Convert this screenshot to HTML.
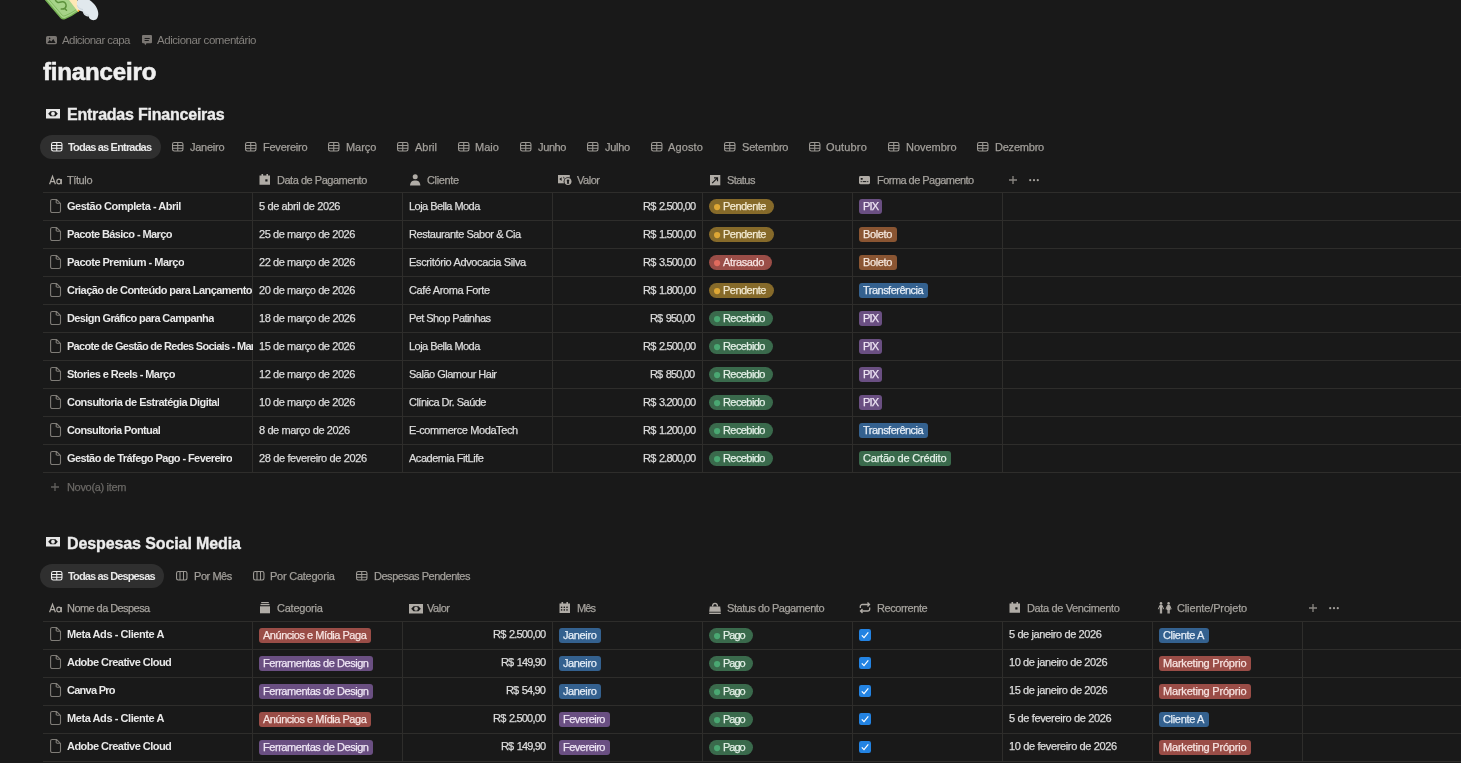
<!DOCTYPE html>
<html><head><meta charset="utf-8"><style>
html,body{margin:0;padding:0}
body{width:1461px;height:763px;background:#191919;position:relative;overflow:hidden;font-family:"Liberation Sans",sans-serif}
.a{position:absolute;display:block}
.t{white-space:nowrap;line-height:1;height:1.2em;will-change:transform}
.t4{-webkit-text-stroke:0.25px currentColor}
svg{overflow:visible}
</style></head><body>
<svg class="a" style="left:40px;top:0px" width="64" height="22" viewBox="0 0 64 22"><path d="M4.8 0 L20.5 18.2 Q22.5 20.3 25 19.3 Q32 16.5 38.3 11.8 L42.8 7 L36.5 0Z" fill="#77b255"/><path d="M6.9 0 L21.2 16.8 Q22.8 18.6 24.7 17.9 Q31.5 15.2 37.6 10.6 L41.3 6.8 L35 0Z" fill="#a6d388"/><path d="M9.3 0 L22.3 15.3 Q23.5 16.4 25 15.8 Q31 13.5 36.8 9.3" fill="none" stroke="#77b255" stroke-width="0.8"/><path d="M15.3 -0.5 C16 2.5 18.5 2.8 21 2 C24.5 1 26.5 3.5 26 6.5 C25.5 8.5 23.5 9.3 21.2 9 M24.8 8.7 L26.5 10.3" fill="none" stroke="#5c913b" stroke-width="1.5" stroke-linecap="round"/><path d="M29 0 L37.8 11.4 L43 6.3 L37 0Z" fill="#ffe8b6"/><path d="M37.8 11.6 L43.5 5.5" stroke="#ffac33" stroke-width="1.4"/><path d="M38 0 H49.5 C54 3 58.5 8.5 58.3 14 C58 18.5 56 20.3 53.3 20.2 C50.5 20 49 18.5 48.8 16.5 C46 16.5 43 14.5 42.8 11.5 C40 11.3 37 9 37.2 5.5 C36.5 3 36.8 1 38 0Z" fill="#e1e8ed"/><path d="M37.3 5.3 C37.8 7.5 40 9.3 43 9.5 M43 11.3 C43.8 13.5 46 15 49 15.3" fill="none" stroke="#ccd6dd" stroke-width="1"/></svg>
<svg class="a" style="left:46px;top:35.9px" width="11" height="8.2" viewBox="0 0 11 8.2"><rect x="0" y="0" width="11" height="8.2" rx="1.6" fill="#7a7672"/><path d="M1.3 7 L3.6 4 L5.3 5.6 L7.3 2.9 L9.6 7Z" fill="#191919"/><circle cx="3.6" cy="2.4" r="0.8" fill="#191919"/></svg>
<div class="a t" style="left:61.60px;top:35.27px;font-size:11.5px;font-weight:400;color:#84817d;letter-spacing:-0.591px;word-spacing:0px">Adicionar capa</div>
<svg class="a" style="left:142.1px;top:34.9px" width="10" height="10.2" viewBox="0 0 10 10.2"><path d="M1 0h8a1 1 0 0 1 1 1v6.2a1 1 0 0 1-1 1H4.5L3.2 10.2 L2.3 8.2H1a1 1 0 0 1-1-1V1a1 1 0 0 1 1-1z" fill="#7a7672"/><path d="M2.6 3.5h5.1M2.6 5.5h4.2" stroke="#191919" stroke-width="1"/></svg>
<div class="a t" style="left:157.30px;top:35.27px;font-size:11.5px;font-weight:400;color:#84817d;letter-spacing:-0.454px;word-spacing:0px">Adicionar comentário</div>
<div class="a t" style="left:42.50px;top:60.18px;font-size:24px;font-weight:700;color:#f0f0f0;letter-spacing:-0.156px;word-spacing:0px;-webkit-text-stroke:0.6px currentColor">financeiro</div>
<svg class="a" style="left:46px;top:108.8px" width="14" height="9.5" viewBox="0 0 14 9.5"><rect x="0" y="0" width="14" height="9.5" fill="#e6e6e6"/><path d="M2.2 4.75 L4.5 2.2 H9.5 L11.8 4.75 L9.5 7.3 H4.5Z" fill="#191919"/><ellipse cx="7" cy="4.75" rx="1.9" ry="2" fill="#e6e6e6"/></svg>
<div class="a t" style="left:67.00px;top:107.46px;font-size:16px;font-weight:700;color:#ececec;letter-spacing:-0.218px;word-spacing:0px;-webkit-text-stroke:0.35px currentColor">Entradas Financeiras</div>
<div class="a" style="left:40px;top:135px;width:121px;height:24px;background:#2f2f2f;border-radius:12px"></div>
<svg class="a" style="left:50.7px;top:142px" width="12" height="10" viewBox="0 0 12 10"><rect x="0.55" y="0.55" width="10.4" height="8.5" rx="1.7" fill="none" stroke="#f0f0f0" stroke-width="1.1"/><path d="M5.75 0.5v8.6M0.5 3.4h10.5M0.5 6.2h10.5" stroke="#f0f0f0" stroke-width="1.05"/></svg>
<div class="a t" style="left:68.00px;top:141.69px;font-size:11px;font-weight:700;color:#e8e8e8;letter-spacing:-0.812px;word-spacing:0px">Todas as Entradas</div>
<svg class="a" style="left:171.7px;top:142px" width="12" height="10" viewBox="0 0 12 10"><rect x="0.55" y="0.55" width="10.4" height="8.5" rx="1.7" fill="none" stroke="#9c9994" stroke-width="1.1"/><path d="M5.75 0.5v8.6M0.5 3.4h10.5M0.5 6.2h10.5" stroke="#9c9994" stroke-width="1.05"/></svg>
<div class="a t t4" style="left:190.20px;top:141.69px;font-size:11px;font-weight:400;color:#a29f9a;letter-spacing:-0.263px;word-spacing:0px">Janeiro</div>
<svg class="a" style="left:244.6px;top:142px" width="12" height="10" viewBox="0 0 12 10"><rect x="0.55" y="0.55" width="10.4" height="8.5" rx="1.7" fill="none" stroke="#9c9994" stroke-width="1.1"/><path d="M5.75 0.5v8.6M0.5 3.4h10.5M0.5 6.2h10.5" stroke="#9c9994" stroke-width="1.05"/></svg>
<div class="a t t4" style="left:262.60px;top:141.69px;font-size:11px;font-weight:400;color:#a29f9a;letter-spacing:-0.234px;word-spacing:0px">Fevereiro</div>
<svg class="a" style="left:328.2px;top:142px" width="12" height="10" viewBox="0 0 12 10"><rect x="0.55" y="0.55" width="10.4" height="8.5" rx="1.7" fill="none" stroke="#9c9994" stroke-width="1.1"/><path d="M5.75 0.5v8.6M0.5 3.4h10.5M0.5 6.2h10.5" stroke="#9c9994" stroke-width="1.05"/></svg>
<div class="a t t4" style="left:345.70px;top:141.69px;font-size:11px;font-weight:400;color:#a29f9a;letter-spacing:-0.041px;word-spacing:0px">Março</div>
<svg class="a" style="left:397.2px;top:142px" width="12" height="10" viewBox="0 0 12 10"><rect x="0.55" y="0.55" width="10.4" height="8.5" rx="1.7" fill="none" stroke="#9c9994" stroke-width="1.1"/><path d="M5.75 0.5v8.6M0.5 3.4h10.5M0.5 6.2h10.5" stroke="#9c9994" stroke-width="1.05"/></svg>
<div class="a t t4" style="left:415.00px;top:141.69px;font-size:11px;font-weight:400;color:#a29f9a;letter-spacing:-0.029px;word-spacing:0px">Abril</div>
<svg class="a" style="left:458.2px;top:142px" width="12" height="10" viewBox="0 0 12 10"><rect x="0.55" y="0.55" width="10.4" height="8.5" rx="1.7" fill="none" stroke="#9c9994" stroke-width="1.1"/><path d="M5.75 0.5v8.6M0.5 3.4h10.5M0.5 6.2h10.5" stroke="#9c9994" stroke-width="1.05"/></svg>
<div class="a t t4" style="left:475.20px;top:141.69px;font-size:11px;font-weight:400;color:#a29f9a;letter-spacing:-0.015px;word-spacing:0px">Maio</div>
<svg class="a" style="left:520.4px;top:142px" width="12" height="10" viewBox="0 0 12 10"><rect x="0.55" y="0.55" width="10.4" height="8.5" rx="1.7" fill="none" stroke="#9c9994" stroke-width="1.1"/><path d="M5.75 0.5v8.6M0.5 3.4h10.5M0.5 6.2h10.5" stroke="#9c9994" stroke-width="1.05"/></svg>
<div class="a t t4" style="left:537.60px;top:141.69px;font-size:11px;font-weight:400;color:#a29f9a;letter-spacing:-0.371px;word-spacing:0px">Junho</div>
<svg class="a" style="left:586.9px;top:142px" width="12" height="10" viewBox="0 0 12 10"><rect x="0.55" y="0.55" width="10.4" height="8.5" rx="1.7" fill="none" stroke="#9c9994" stroke-width="1.1"/><path d="M5.75 0.5v8.6M0.5 3.4h10.5M0.5 6.2h10.5" stroke="#9c9994" stroke-width="1.05"/></svg>
<div class="a t t4" style="left:604.70px;top:141.69px;font-size:11px;font-weight:400;color:#a29f9a;letter-spacing:-0.274px;word-spacing:0px">Julho</div>
<svg class="a" style="left:651.3px;top:142px" width="12" height="10" viewBox="0 0 12 10"><rect x="0.55" y="0.55" width="10.4" height="8.5" rx="1.7" fill="none" stroke="#9c9994" stroke-width="1.1"/><path d="M5.75 0.5v8.6M0.5 3.4h10.5M0.5 6.2h10.5" stroke="#9c9994" stroke-width="1.05"/></svg>
<div class="a t t4" style="left:668.20px;top:141.69px;font-size:11px;font-weight:400;color:#a29f9a;letter-spacing:0.130px;word-spacing:0px">Agosto</div>
<svg class="a" style="left:723.7px;top:142px" width="12" height="10" viewBox="0 0 12 10"><rect x="0.55" y="0.55" width="10.4" height="8.5" rx="1.7" fill="none" stroke="#9c9994" stroke-width="1.1"/><path d="M5.75 0.5v8.6M0.5 3.4h10.5M0.5 6.2h10.5" stroke="#9c9994" stroke-width="1.05"/></svg>
<div class="a t t4" style="left:741.50px;top:141.69px;font-size:11px;font-weight:400;color:#a29f9a;letter-spacing:-0.172px;word-spacing:0px">Setembro</div>
<svg class="a" style="left:808.5px;top:142px" width="12" height="10" viewBox="0 0 12 10"><rect x="0.55" y="0.55" width="10.4" height="8.5" rx="1.7" fill="none" stroke="#9c9994" stroke-width="1.1"/><path d="M5.75 0.5v8.6M0.5 3.4h10.5M0.5 6.2h10.5" stroke="#9c9994" stroke-width="1.05"/></svg>
<div class="a t t4" style="left:826.30px;top:141.69px;font-size:11px;font-weight:400;color:#a29f9a;letter-spacing:0.175px;word-spacing:0px">Outubro</div>
<svg class="a" style="left:887.7px;top:142px" width="12" height="10" viewBox="0 0 12 10"><rect x="0.55" y="0.55" width="10.4" height="8.5" rx="1.7" fill="none" stroke="#9c9994" stroke-width="1.1"/><path d="M5.75 0.5v8.6M0.5 3.4h10.5M0.5 6.2h10.5" stroke="#9c9994" stroke-width="1.05"/></svg>
<div class="a t t4" style="left:905.50px;top:141.69px;font-size:11px;font-weight:400;color:#a29f9a;letter-spacing:-0.021px;word-spacing:0px">Novembro</div>
<svg class="a" style="left:976.6px;top:142px" width="12" height="10" viewBox="0 0 12 10"><rect x="0.55" y="0.55" width="10.4" height="8.5" rx="1.7" fill="none" stroke="#9c9994" stroke-width="1.1"/><path d="M5.75 0.5v8.6M0.5 3.4h10.5M0.5 6.2h10.5" stroke="#9c9994" stroke-width="1.05"/></svg>
<div class="a t t4" style="left:994.50px;top:141.69px;font-size:11px;font-weight:400;color:#a29f9a;letter-spacing:-0.221px;word-spacing:0px">Dezembro</div>
<svg class="a" style="left:48.9px;top:175.8px" width="13" height="8.5" viewBox="0 0 13 8.5"><path d="M0.6 8.3 L3.5 0.3 L6.4 8.3 M1.7 5.6 H5.3" fill="none" stroke="#b0aca6" stroke-width="1.25"/><ellipse cx="9.9" cy="5.5" rx="2.1" ry="2.45" fill="none" stroke="#b0aca6" stroke-width="1.2"/><path d="M12.3 2.9 V8.3" stroke="#b0aca6" stroke-width="1.2"/></svg>
<div class="a t t4" style="left:67.00px;top:174.69px;font-size:11px;font-weight:400;color:#a4a19c;letter-spacing:-0.403px;word-spacing:0px">Título</div>
<svg class="a" style="left:259.3px;top:174px" width="11" height="11" viewBox="0 0 11 11"><path d="M0.5 1.5h2V0h1.6v1.5h3.3V0h1.6v1.5h2v9.2h-10.5z" fill="#b0aca6"/><rect x="6.3" y="5.3" width="2.2" height="2.2" fill="#191919"/></svg>
<div class="a t t4" style="left:276.80px;top:174.69px;font-size:11px;font-weight:400;color:#a4a19c;letter-spacing:-0.472px;word-spacing:0px">Data de Pagamento</div>
<svg class="a" style="left:409.9px;top:174px" width="10.5" height="12" viewBox="0 0 10.5 12"><circle cx="5.2" cy="2.8" r="2.5" fill="#b0aca6"/><path d="M0 11.5 C0.3 7.8 2.3 6.5 5.2 6.5 C8.1 6.5 10.1 7.8 10.4 11.5z" fill="#b0aca6"/></svg>
<div class="a t t4" style="left:426.80px;top:174.69px;font-size:11px;font-weight:400;color:#a4a19c;letter-spacing:-0.342px;word-spacing:0px">Cliente</div>
<svg class="a" style="left:558px;top:174.8px" width="14.5" height="11.2" viewBox="0 0 14.5 11.2"><rect x="0" y="0" width="11.8" height="8.3" fill="#b0aca6"/><path d="M1.3 4.1 L3.6 2.2 V6 Z" fill="#191919"/><path d="M5.2 2.2 C6 2.2 6.3 3 6 3.6" stroke="#191919" stroke-width="0.9" fill="none"/><circle cx="10" cy="6.6" r="4.4" fill="#191919"/><circle cx="10" cy="6.6" r="3.5" fill="#b0aca6"/><circle cx="10" cy="5.8" r="1.3" fill="#191919"/><path d="M9.3 6.5 h1.4 l0.5 2.2 h-2.4z" fill="#191919"/></svg>
<div class="a t t4" style="left:576.80px;top:174.69px;font-size:11px;font-weight:400;color:#a4a19c;letter-spacing:-0.469px;word-spacing:0px">Valor</div>
<svg class="a" style="left:709.9px;top:174.8px" width="10.5" height="10.5" viewBox="0 0 10.5 10.5"><rect x="0" y="0" width="10.3" height="10.3" fill="#b0aca6"/><path d="M2.2 8.2 L7.2 3.2 M4 2.8h3.5v3.5" stroke="#191919" stroke-width="1.2" fill="none"/></svg>
<div class="a t t4" style="left:726.80px;top:174.69px;font-size:11px;font-weight:400;color:#a4a19c;letter-spacing:-0.558px;word-spacing:0px">Status</div>
<svg class="a" style="left:859.3px;top:176px" width="11" height="8" viewBox="0 0 11 8"><rect x="0" y="0" width="11" height="8.2" rx="1.4" fill="#b0aca6"/><rect x="1.6" y="1.9" width="2.2" height="1.8" rx="0.6" fill="#191919"/><circle cx="2.2" cy="5.6" r="0.65" fill="#191919"/><rect x="3.7" y="5.1" width="3.6" height="1" fill="#191919"/><circle cx="8.8" cy="5.6" r="0.65" fill="#191919"/></svg>
<div class="a t t4" style="left:876.70px;top:174.69px;font-size:11px;font-weight:400;color:#a4a19c;letter-spacing:-0.541px;word-spacing:0px">Forma de Pagamento</div>
<svg class="a" style="left:1008.8px;top:175.5px" width="8" height="8" viewBox="0 0 8 8"><path d="M4 0v8M0 4h8" stroke="#8a8782" stroke-width="1.3"/></svg>
<svg class="a" style="left:1029.3px;top:179px" width="10" height="2.4" viewBox="0 0 10 2.4"><circle cx="1.2" cy="1.2" r="1.1" fill="#a4a19c"/><circle cx="5" cy="1.2" r="1.1" fill="#a4a19c"/><circle cx="8.8" cy="1.2" r="1.1" fill="#a4a19c"/></svg>
<div class="a" style="left:43px;top:192px;width:1418px;height:1px;background:#2e2d2b;border-radius:0px"></div>
<div class="a" style="left:43px;top:220px;width:1418px;height:1px;background:#2e2d2b;border-radius:0px"></div>
<div class="a" style="left:43px;top:248px;width:1418px;height:1px;background:#2e2d2b;border-radius:0px"></div>
<div class="a" style="left:43px;top:276px;width:1418px;height:1px;background:#2e2d2b;border-radius:0px"></div>
<div class="a" style="left:43px;top:304px;width:1418px;height:1px;background:#2e2d2b;border-radius:0px"></div>
<div class="a" style="left:43px;top:332px;width:1418px;height:1px;background:#2e2d2b;border-radius:0px"></div>
<div class="a" style="left:43px;top:360px;width:1418px;height:1px;background:#2e2d2b;border-radius:0px"></div>
<div class="a" style="left:43px;top:388px;width:1418px;height:1px;background:#2e2d2b;border-radius:0px"></div>
<div class="a" style="left:43px;top:416px;width:1418px;height:1px;background:#2e2d2b;border-radius:0px"></div>
<div class="a" style="left:43px;top:444px;width:1418px;height:1px;background:#2e2d2b;border-radius:0px"></div>
<div class="a" style="left:43px;top:472px;width:1418px;height:1px;background:#2e2d2b;border-radius:0px"></div>
<div class="a" style="left:252px;top:192px;width:1px;height:280px;background:#2e2d2b;border-radius:0px"></div>
<div class="a" style="left:402px;top:192px;width:1px;height:280px;background:#2e2d2b;border-radius:0px"></div>
<div class="a" style="left:552px;top:192px;width:1px;height:280px;background:#2e2d2b;border-radius:0px"></div>
<div class="a" style="left:702px;top:192px;width:1px;height:280px;background:#2e2d2b;border-radius:0px"></div>
<div class="a" style="left:852px;top:192px;width:1px;height:280px;background:#2e2d2b;border-radius:0px"></div>
<div class="a" style="left:1002px;top:192px;width:1px;height:280px;background:#2e2d2b;border-radius:0px"></div>
<svg class="a" style="left:49.9px;top:198.6px" width="11.5" height="14" viewBox="0 0 11.5 14"><path d="M0.6 2.1a1.6 1.6 0 0 1 1.6-1.6h4.4l3.9 3.9v7.5a1.6 1.6 0 0 1-1.6 1.6H2.2a1.6 1.6 0 0 1-1.6-1.6z M6.2 0.6v2.6a1.1 1.1 0 0 0 1.1 1.1h3.1" fill="none" stroke="#7f7c77" stroke-width="1.1"/></svg>
<div class="a t" style="left:66.50px;top:201.19px;font-size:11px;font-weight:700;color:#e8e8e8;letter-spacing:-0.477px;word-spacing:0px;max-width:185.50px;overflow:hidden">Gestão Completa - Abril</div>
<div class="a t t4" style="left:258.60px;top:201.19px;font-size:11px;font-weight:400;color:#dcdcdc;letter-spacing:-0.387px;word-spacing:0px">5 de abril de 2026</div>
<div class="a t t4" style="left:408.60px;top:201.19px;font-size:11px;font-weight:400;color:#dcdcdc;letter-spacing:-0.542px;word-spacing:0px">Loja Bella Moda</div>
<div class="a t t4" style="left:642.50px;top:201.19px;font-size:11px;font-weight:400;color:#dcdcdc;letter-spacing:-0.804px;word-spacing:1.2px">R$ 2.500,00</div>
<div class="a" style="left:708.8px;top:199px;width:65px;height:15px;background:#866a2a;border-radius:7.5px"></div>
<svg class="a" style="left:713.8px;top:203.9px" width="6.2" height="6.2" viewBox="0 0 6.2 6.2"><circle cx="3.1" cy="3.1" r="3.1" fill="#dea735"/></svg>
<div class="a t t4" style="left:723.40px;top:201.29px;font-size:11px;font-weight:400;color:#f3ead2;letter-spacing:-0.530px;word-spacing:0px">Pendente</div>
<div class="a" style="left:859.1px;top:199px;width:22.9px;height:15px;background:#6a4f82;border-radius:3px"></div>
<div class="a t t4" style="left:862.50px;top:201.29px;font-size:11px;font-weight:400;color:#efe6f5;letter-spacing:-0.767px;word-spacing:0px">PIX</div>
<svg class="a" style="left:49.9px;top:226.6px" width="11.5" height="14" viewBox="0 0 11.5 14"><path d="M0.6 2.1a1.6 1.6 0 0 1 1.6-1.6h4.4l3.9 3.9v7.5a1.6 1.6 0 0 1-1.6 1.6H2.2a1.6 1.6 0 0 1-1.6-1.6z M6.2 0.6v2.6a1.1 1.1 0 0 0 1.1 1.1h3.1" fill="none" stroke="#7f7c77" stroke-width="1.1"/></svg>
<div class="a t" style="left:66.50px;top:229.19px;font-size:11px;font-weight:700;color:#e8e8e8;letter-spacing:-0.594px;word-spacing:0px;max-width:185.50px;overflow:hidden">Pacote Básico - Março</div>
<div class="a t t4" style="left:258.60px;top:229.19px;font-size:11px;font-weight:400;color:#dcdcdc;letter-spacing:-0.420px;word-spacing:0px">25 de março de 2026</div>
<div class="a t t4" style="left:408.60px;top:229.19px;font-size:11px;font-weight:400;color:#dcdcdc;letter-spacing:-0.459px;word-spacing:0px">Restaurante Sabor &amp; Cia</div>
<div class="a t t4" style="left:642.50px;top:229.19px;font-size:11px;font-weight:400;color:#dcdcdc;letter-spacing:-0.804px;word-spacing:1.2px">R$ 1.500,00</div>
<div class="a" style="left:708.8px;top:227px;width:65px;height:15px;background:#866a2a;border-radius:7.5px"></div>
<svg class="a" style="left:713.8px;top:231.9px" width="6.2" height="6.2" viewBox="0 0 6.2 6.2"><circle cx="3.1" cy="3.1" r="3.1" fill="#dea735"/></svg>
<div class="a t t4" style="left:723.40px;top:229.29px;font-size:11px;font-weight:400;color:#f3ead2;letter-spacing:-0.530px;word-spacing:0px">Pendente</div>
<div class="a" style="left:859.1px;top:227px;width:37.5px;height:15px;background:#8a5532;border-radius:3px"></div>
<div class="a t t4" style="left:863.10px;top:229.29px;font-size:11px;font-weight:400;color:#f5e8de;letter-spacing:-0.381px;word-spacing:0px">Boleto</div>
<svg class="a" style="left:49.9px;top:254.6px" width="11.5" height="14" viewBox="0 0 11.5 14"><path d="M0.6 2.1a1.6 1.6 0 0 1 1.6-1.6h4.4l3.9 3.9v7.5a1.6 1.6 0 0 1-1.6 1.6H2.2a1.6 1.6 0 0 1-1.6-1.6z M6.2 0.6v2.6a1.1 1.1 0 0 0 1.1 1.1h3.1" fill="none" stroke="#7f7c77" stroke-width="1.1"/></svg>
<div class="a t" style="left:66.50px;top:257.19px;font-size:11px;font-weight:700;color:#e8e8e8;letter-spacing:-0.513px;word-spacing:0px;max-width:185.50px;overflow:hidden">Pacote Premium - Março</div>
<div class="a t t4" style="left:258.60px;top:257.19px;font-size:11px;font-weight:400;color:#dcdcdc;letter-spacing:-0.420px;word-spacing:0px">22 de março de 2026</div>
<div class="a t t4" style="left:408.60px;top:257.19px;font-size:11px;font-weight:400;color:#dcdcdc;letter-spacing:-0.350px;word-spacing:0px">Escritório Advocacia Silva</div>
<div class="a t t4" style="left:642.50px;top:257.19px;font-size:11px;font-weight:400;color:#dcdcdc;letter-spacing:-0.804px;word-spacing:1.2px">R$ 3.500,00</div>
<div class="a" style="left:708.8px;top:255px;width:63px;height:15px;background:#9a4d47;border-radius:7.5px"></div>
<svg class="a" style="left:713.8px;top:259.9px" width="6.2" height="6.2" viewBox="0 0 6.2 6.2"><circle cx="3.1" cy="3.1" r="3.1" fill="#e06b5e"/></svg>
<div class="a t t4" style="left:723.40px;top:257.29px;font-size:11px;font-weight:400;color:#f7e4e2;letter-spacing:-0.376px;word-spacing:0px">Atrasado</div>
<div class="a" style="left:859.1px;top:255px;width:37.5px;height:15px;background:#8a5532;border-radius:3px"></div>
<div class="a t t4" style="left:863.10px;top:257.29px;font-size:11px;font-weight:400;color:#f5e8de;letter-spacing:-0.381px;word-spacing:0px">Boleto</div>
<svg class="a" style="left:49.9px;top:282.6px" width="11.5" height="14" viewBox="0 0 11.5 14"><path d="M0.6 2.1a1.6 1.6 0 0 1 1.6-1.6h4.4l3.9 3.9v7.5a1.6 1.6 0 0 1-1.6 1.6H2.2a1.6 1.6 0 0 1-1.6-1.6z M6.2 0.6v2.6a1.1 1.1 0 0 0 1.1 1.1h3.1" fill="none" stroke="#7f7c77" stroke-width="1.1"/></svg>
<div class="a t" style="left:66.50px;top:285.19px;font-size:11px;font-weight:700;color:#e8e8e8;letter-spacing:-0.567px;word-spacing:0px;max-width:185.50px;overflow:hidden">Criação de Conteúdo para Lançamento</div>
<div class="a t t4" style="left:258.60px;top:285.19px;font-size:11px;font-weight:400;color:#dcdcdc;letter-spacing:-0.420px;word-spacing:0px">20 de março de 2026</div>
<div class="a t t4" style="left:408.60px;top:285.19px;font-size:11px;font-weight:400;color:#dcdcdc;letter-spacing:-0.382px;word-spacing:0px">Café Aroma Forte</div>
<div class="a t t4" style="left:642.50px;top:285.19px;font-size:11px;font-weight:400;color:#dcdcdc;letter-spacing:-0.804px;word-spacing:1.2px">R$ 1.800,00</div>
<div class="a" style="left:708.8px;top:283px;width:65px;height:15px;background:#866a2a;border-radius:7.5px"></div>
<svg class="a" style="left:713.8px;top:287.9px" width="6.2" height="6.2" viewBox="0 0 6.2 6.2"><circle cx="3.1" cy="3.1" r="3.1" fill="#dea735"/></svg>
<div class="a t t4" style="left:723.40px;top:285.29px;font-size:11px;font-weight:400;color:#f3ead2;letter-spacing:-0.530px;word-spacing:0px">Pendente</div>
<div class="a" style="left:859.1px;top:283px;width:68.8px;height:15px;background:#34618f;border-radius:3px"></div>
<div class="a t t4" style="left:863.10px;top:285.29px;font-size:11px;font-weight:400;color:#e6eef7;letter-spacing:-0.520px;word-spacing:0px">Transferência</div>
<svg class="a" style="left:49.9px;top:310.6px" width="11.5" height="14" viewBox="0 0 11.5 14"><path d="M0.6 2.1a1.6 1.6 0 0 1 1.6-1.6h4.4l3.9 3.9v7.5a1.6 1.6 0 0 1-1.6 1.6H2.2a1.6 1.6 0 0 1-1.6-1.6z M6.2 0.6v2.6a1.1 1.1 0 0 0 1.1 1.1h3.1" fill="none" stroke="#7f7c77" stroke-width="1.1"/></svg>
<div class="a t" style="left:66.50px;top:313.19px;font-size:11px;font-weight:700;color:#e8e8e8;letter-spacing:-0.612px;word-spacing:0px;max-width:185.50px;overflow:hidden">Design Gráfico para Campanha</div>
<div class="a t t4" style="left:258.60px;top:313.19px;font-size:11px;font-weight:400;color:#dcdcdc;letter-spacing:-0.404px;word-spacing:0px">18 de março de 2026</div>
<div class="a t t4" style="left:408.60px;top:313.19px;font-size:11px;font-weight:400;color:#dcdcdc;letter-spacing:-0.570px;word-spacing:0px">Pet Shop Patinhas</div>
<div class="a t t4" style="left:650.40px;top:313.19px;font-size:11px;font-weight:400;color:#dcdcdc;letter-spacing:-0.846px;word-spacing:1.2px">R$ 950,00</div>
<div class="a" style="left:708.8px;top:311px;width:64px;height:15px;background:#3a6a4c;border-radius:7.5px"></div>
<svg class="a" style="left:713.8px;top:315.9px" width="6.2" height="6.2" viewBox="0 0 6.2 6.2"><circle cx="3.1" cy="3.1" r="3.1" fill="#4aa772"/></svg>
<div class="a t t4" style="left:723.40px;top:313.29px;font-size:11px;font-weight:400;color:#e3f0e7;letter-spacing:-0.583px;word-spacing:0px">Recebido</div>
<div class="a" style="left:859.1px;top:311px;width:22.9px;height:15px;background:#6a4f82;border-radius:3px"></div>
<div class="a t t4" style="left:862.50px;top:313.29px;font-size:11px;font-weight:400;color:#efe6f5;letter-spacing:-0.767px;word-spacing:0px">PIX</div>
<svg class="a" style="left:49.9px;top:338.6px" width="11.5" height="14" viewBox="0 0 11.5 14"><path d="M0.6 2.1a1.6 1.6 0 0 1 1.6-1.6h4.4l3.9 3.9v7.5a1.6 1.6 0 0 1-1.6 1.6H2.2a1.6 1.6 0 0 1-1.6-1.6z M6.2 0.6v2.6a1.1 1.1 0 0 0 1.1 1.1h3.1" fill="none" stroke="#7f7c77" stroke-width="1.1"/></svg>
<div class="a t" style="left:66.50px;top:341.19px;font-size:11px;font-weight:700;color:#e8e8e8;letter-spacing:-0.713px;word-spacing:0px;max-width:185.50px;overflow:hidden">Pacote de Gestão de Redes Sociais - Março</div>
<div class="a t t4" style="left:258.60px;top:341.19px;font-size:11px;font-weight:400;color:#dcdcdc;letter-spacing:-0.420px;word-spacing:0px">15 de março de 2026</div>
<div class="a t t4" style="left:408.60px;top:341.19px;font-size:11px;font-weight:400;color:#dcdcdc;letter-spacing:-0.542px;word-spacing:0px">Loja Bella Moda</div>
<div class="a t t4" style="left:642.50px;top:341.19px;font-size:11px;font-weight:400;color:#dcdcdc;letter-spacing:-0.804px;word-spacing:1.2px">R$ 2.500,00</div>
<div class="a" style="left:708.8px;top:339px;width:64px;height:15px;background:#3a6a4c;border-radius:7.5px"></div>
<svg class="a" style="left:713.8px;top:343.9px" width="6.2" height="6.2" viewBox="0 0 6.2 6.2"><circle cx="3.1" cy="3.1" r="3.1" fill="#4aa772"/></svg>
<div class="a t t4" style="left:723.40px;top:341.29px;font-size:11px;font-weight:400;color:#e3f0e7;letter-spacing:-0.583px;word-spacing:0px">Recebido</div>
<div class="a" style="left:859.1px;top:339px;width:22.9px;height:15px;background:#6a4f82;border-radius:3px"></div>
<div class="a t t4" style="left:862.50px;top:341.29px;font-size:11px;font-weight:400;color:#efe6f5;letter-spacing:-0.767px;word-spacing:0px">PIX</div>
<svg class="a" style="left:49.9px;top:366.6px" width="11.5" height="14" viewBox="0 0 11.5 14"><path d="M0.6 2.1a1.6 1.6 0 0 1 1.6-1.6h4.4l3.9 3.9v7.5a1.6 1.6 0 0 1-1.6 1.6H2.2a1.6 1.6 0 0 1-1.6-1.6z M6.2 0.6v2.6a1.1 1.1 0 0 0 1.1 1.1h3.1" fill="none" stroke="#7f7c77" stroke-width="1.1"/></svg>
<div class="a t" style="left:66.50px;top:369.19px;font-size:11px;font-weight:700;color:#e8e8e8;letter-spacing:-0.576px;word-spacing:0px;max-width:185.50px;overflow:hidden">Stories e Reels - Março</div>
<div class="a t t4" style="left:258.60px;top:369.19px;font-size:11px;font-weight:400;color:#dcdcdc;letter-spacing:-0.420px;word-spacing:0px">12 de março de 2026</div>
<div class="a t t4" style="left:408.60px;top:369.19px;font-size:11px;font-weight:400;color:#dcdcdc;letter-spacing:-0.506px;word-spacing:0px">Salão Glamour Hair</div>
<div class="a t t4" style="left:650.40px;top:369.19px;font-size:11px;font-weight:400;color:#dcdcdc;letter-spacing:-0.846px;word-spacing:1.2px">R$ 850,00</div>
<div class="a" style="left:708.8px;top:367px;width:64px;height:15px;background:#3a6a4c;border-radius:7.5px"></div>
<svg class="a" style="left:713.8px;top:371.9px" width="6.2" height="6.2" viewBox="0 0 6.2 6.2"><circle cx="3.1" cy="3.1" r="3.1" fill="#4aa772"/></svg>
<div class="a t t4" style="left:723.40px;top:369.29px;font-size:11px;font-weight:400;color:#e3f0e7;letter-spacing:-0.583px;word-spacing:0px">Recebido</div>
<div class="a" style="left:859.1px;top:367px;width:22.9px;height:15px;background:#6a4f82;border-radius:3px"></div>
<div class="a t t4" style="left:862.50px;top:369.29px;font-size:11px;font-weight:400;color:#efe6f5;letter-spacing:-0.767px;word-spacing:0px">PIX</div>
<svg class="a" style="left:49.9px;top:394.6px" width="11.5" height="14" viewBox="0 0 11.5 14"><path d="M0.6 2.1a1.6 1.6 0 0 1 1.6-1.6h4.4l3.9 3.9v7.5a1.6 1.6 0 0 1-1.6 1.6H2.2a1.6 1.6 0 0 1-1.6-1.6z M6.2 0.6v2.6a1.1 1.1 0 0 0 1.1 1.1h3.1" fill="none" stroke="#7f7c77" stroke-width="1.1"/></svg>
<div class="a t" style="left:66.50px;top:397.19px;font-size:11px;font-weight:700;color:#e8e8e8;letter-spacing:-0.529px;word-spacing:0px;max-width:185.50px;overflow:hidden">Consultoria de Estratégia Digital</div>
<div class="a t t4" style="left:258.60px;top:397.19px;font-size:11px;font-weight:400;color:#dcdcdc;letter-spacing:-0.420px;word-spacing:0px">10 de março de 2026</div>
<div class="a t t4" style="left:408.60px;top:397.19px;font-size:11px;font-weight:400;color:#dcdcdc;letter-spacing:-0.507px;word-spacing:0px">Clínica Dr. Saúde</div>
<div class="a t t4" style="left:642.50px;top:397.19px;font-size:11px;font-weight:400;color:#dcdcdc;letter-spacing:-0.804px;word-spacing:1.2px">R$ 3.200,00</div>
<div class="a" style="left:708.8px;top:395px;width:64px;height:15px;background:#3a6a4c;border-radius:7.5px"></div>
<svg class="a" style="left:713.8px;top:399.9px" width="6.2" height="6.2" viewBox="0 0 6.2 6.2"><circle cx="3.1" cy="3.1" r="3.1" fill="#4aa772"/></svg>
<div class="a t t4" style="left:723.40px;top:397.29px;font-size:11px;font-weight:400;color:#e3f0e7;letter-spacing:-0.583px;word-spacing:0px">Recebido</div>
<div class="a" style="left:859.1px;top:395px;width:22.9px;height:15px;background:#6a4f82;border-radius:3px"></div>
<div class="a t t4" style="left:862.50px;top:397.29px;font-size:11px;font-weight:400;color:#efe6f5;letter-spacing:-0.767px;word-spacing:0px">PIX</div>
<svg class="a" style="left:49.9px;top:422.6px" width="11.5" height="14" viewBox="0 0 11.5 14"><path d="M0.6 2.1a1.6 1.6 0 0 1 1.6-1.6h4.4l3.9 3.9v7.5a1.6 1.6 0 0 1-1.6 1.6H2.2a1.6 1.6 0 0 1-1.6-1.6z M6.2 0.6v2.6a1.1 1.1 0 0 0 1.1 1.1h3.1" fill="none" stroke="#7f7c77" stroke-width="1.1"/></svg>
<div class="a t" style="left:66.50px;top:425.19px;font-size:11px;font-weight:700;color:#e8e8e8;letter-spacing:-0.594px;word-spacing:0px;max-width:185.50px;overflow:hidden">Consultoria Pontual</div>
<div class="a t t4" style="left:258.60px;top:425.19px;font-size:11px;font-weight:400;color:#dcdcdc;letter-spacing:-0.398px;word-spacing:0px">8 de março de 2026</div>
<div class="a t t4" style="left:408.60px;top:425.19px;font-size:11px;font-weight:400;color:#dcdcdc;letter-spacing:-0.386px;word-spacing:0px">E-commerce ModaTech</div>
<div class="a t t4" style="left:642.50px;top:425.19px;font-size:11px;font-weight:400;color:#dcdcdc;letter-spacing:-0.804px;word-spacing:1.2px">R$ 1.200,00</div>
<div class="a" style="left:708.8px;top:423px;width:64px;height:15px;background:#3a6a4c;border-radius:7.5px"></div>
<svg class="a" style="left:713.8px;top:427.9px" width="6.2" height="6.2" viewBox="0 0 6.2 6.2"><circle cx="3.1" cy="3.1" r="3.1" fill="#4aa772"/></svg>
<div class="a t t4" style="left:723.40px;top:425.29px;font-size:11px;font-weight:400;color:#e3f0e7;letter-spacing:-0.583px;word-spacing:0px">Recebido</div>
<div class="a" style="left:859.1px;top:423px;width:68.8px;height:15px;background:#34618f;border-radius:3px"></div>
<div class="a t t4" style="left:863.10px;top:425.29px;font-size:11px;font-weight:400;color:#e6eef7;letter-spacing:-0.520px;word-spacing:0px">Transferência</div>
<svg class="a" style="left:49.9px;top:450.6px" width="11.5" height="14" viewBox="0 0 11.5 14"><path d="M0.6 2.1a1.6 1.6 0 0 1 1.6-1.6h4.4l3.9 3.9v7.5a1.6 1.6 0 0 1-1.6 1.6H2.2a1.6 1.6 0 0 1-1.6-1.6z M6.2 0.6v2.6a1.1 1.1 0 0 0 1.1 1.1h3.1" fill="none" stroke="#7f7c77" stroke-width="1.1"/></svg>
<div class="a t" style="left:66.50px;top:453.19px;font-size:11px;font-weight:700;color:#e8e8e8;letter-spacing:-0.589px;word-spacing:0px;max-width:185.50px;overflow:hidden">Gestão de Tráfego Pago - Fevereiro</div>
<div class="a t t4" style="left:258.60px;top:453.19px;font-size:11px;font-weight:400;color:#dcdcdc;letter-spacing:-0.368px;word-spacing:0px">28 de fevereiro de 2026</div>
<div class="a t t4" style="left:408.60px;top:453.19px;font-size:11px;font-weight:400;color:#dcdcdc;letter-spacing:-0.469px;word-spacing:0px">Academia FitLife</div>
<div class="a t t4" style="left:642.50px;top:453.19px;font-size:11px;font-weight:400;color:#dcdcdc;letter-spacing:-0.804px;word-spacing:1.2px">R$ 2.800,00</div>
<div class="a" style="left:708.8px;top:451px;width:64px;height:15px;background:#3a6a4c;border-radius:7.5px"></div>
<svg class="a" style="left:713.8px;top:455.9px" width="6.2" height="6.2" viewBox="0 0 6.2 6.2"><circle cx="3.1" cy="3.1" r="3.1" fill="#4aa772"/></svg>
<div class="a t t4" style="left:723.40px;top:453.29px;font-size:11px;font-weight:400;color:#e3f0e7;letter-spacing:-0.583px;word-spacing:0px">Recebido</div>
<div class="a" style="left:859.1px;top:451px;width:91.7px;height:15px;background:#3a6a4c;border-radius:3px"></div>
<div class="a t t4" style="left:863.10px;top:453.29px;font-size:11px;font-weight:400;color:#e3f0e7;letter-spacing:-0.208px;word-spacing:0px">Cartão de Crédito</div>
<svg class="a" style="left:51px;top:483.2px" width="8" height="8" viewBox="0 0 8 8"><path d="M4 0v8M0 4h8" stroke="#62605d" stroke-width="1.3"/></svg>
<div class="a t t4" style="left:66.70px;top:482.09px;font-size:11px;font-weight:400;color:#6a6865;letter-spacing:-0.324px;word-spacing:0px">Novo(a) item</div>
<svg class="a" style="left:46px;top:537px" width="14" height="9.5" viewBox="0 0 14 9.5"><rect x="0" y="0" width="14" height="9.5" fill="#e6e6e6"/><path d="M2.2 4.75 L4.5 2.2 H9.5 L11.8 4.75 L9.5 7.3 H4.5Z" fill="#191919"/><ellipse cx="7" cy="4.75" rx="1.9" ry="2" fill="#e6e6e6"/></svg>
<div class="a t" style="left:67.00px;top:536.26px;font-size:16px;font-weight:700;color:#ececec;letter-spacing:-0.105px;word-spacing:0px;-webkit-text-stroke:0.35px currentColor">Despesas Social Media</div>
<div class="a" style="left:40px;top:564px;width:124px;height:24px;background:#2f2f2f;border-radius:12px"></div>
<svg class="a" style="left:50.7px;top:571px" width="12" height="10" viewBox="0 0 12 10"><rect x="0.55" y="0.55" width="10.4" height="8.5" rx="1.7" fill="none" stroke="#f0f0f0" stroke-width="1.1"/><path d="M5.75 0.5v8.6M0.5 3.4h10.5M0.5 6.2h10.5" stroke="#f0f0f0" stroke-width="1.05"/></svg>
<div class="a t" style="left:68.00px;top:570.69px;font-size:11px;font-weight:700;color:#e8e8e8;letter-spacing:-0.862px;word-spacing:0px">Todas as Despesas</div>
<svg class="a" style="left:175.5px;top:571px" width="12" height="10" viewBox="0 0 12 10"><rect x="0.55" y="0.55" width="10.4" height="8.5" rx="1.7" fill="none" stroke="#9c9994" stroke-width="1.1"/><path d="M4 0.5v8.6M7.5 0.5v8.6" stroke="#9c9994" stroke-width="1.05"/></svg>
<div class="a t t4" style="left:193.50px;top:570.69px;font-size:11px;font-weight:400;color:#a29f9a;letter-spacing:-0.445px;word-spacing:0px">Por Mês</div>
<svg class="a" style="left:253px;top:571px" width="12" height="10" viewBox="0 0 12 10"><rect x="0.55" y="0.55" width="10.4" height="8.5" rx="1.7" fill="none" stroke="#9c9994" stroke-width="1.1"/><path d="M4 0.5v8.6M7.5 0.5v8.6" stroke="#9c9994" stroke-width="1.05"/></svg>
<div class="a t t4" style="left:270.20px;top:570.69px;font-size:11px;font-weight:400;color:#a29f9a;letter-spacing:-0.240px;word-spacing:0px">Por Categoria</div>
<svg class="a" style="left:355.6px;top:571px" width="12" height="10" viewBox="0 0 12 10"><rect x="0.55" y="0.55" width="10.4" height="8.5" rx="1.7" fill="none" stroke="#9c9994" stroke-width="1.1"/><path d="M5.75 0.5v8.6M0.5 3.4h10.5M0.5 6.2h10.5" stroke="#9c9994" stroke-width="1.05"/></svg>
<div class="a t t4" style="left:373.50px;top:570.69px;font-size:11px;font-weight:400;color:#a29f9a;letter-spacing:-0.475px;word-spacing:0px">Despesas Pendentes</div>
<svg class="a" style="left:48.9px;top:604.2px" width="13" height="8.5" viewBox="0 0 13 8.5"><path d="M0.6 8.3 L3.5 0.3 L6.4 8.3 M1.7 5.6 H5.3" fill="none" stroke="#b0aca6" stroke-width="1.25"/><ellipse cx="9.9" cy="5.5" rx="2.1" ry="2.45" fill="none" stroke="#b0aca6" stroke-width="1.2"/><path d="M12.3 2.9 V8.3" stroke="#b0aca6" stroke-width="1.2"/></svg>
<div class="a t t4" style="left:66.80px;top:602.79px;font-size:11px;font-weight:400;color:#a4a19c;letter-spacing:-0.565px;word-spacing:0px">Nome da Despesa</div>
<svg class="a" style="left:259.8px;top:602px" width="10" height="11.3" viewBox="0 0 10 11.3"><rect x="1.2" y="0" width="7.6" height="1.2" fill="#b0aca6"/><rect x="0.5" y="2" width="9" height="1.2" fill="#b0aca6"/><rect x="0" y="4.3" width="10" height="7" fill="#b0aca6"/></svg>
<div class="a t t4" style="left:276.80px;top:602.79px;font-size:11px;font-weight:400;color:#a4a19c;letter-spacing:-0.238px;word-spacing:0px">Categoria</div>
<svg class="a" style="left:408.8px;top:604px" width="14" height="9.5" viewBox="0 0 14 9.5"><rect x="0" y="0" width="14" height="9.5" fill="#b0aca6"/><path d="M2.2 4.75 L4.5 2.2 H9.5 L11.8 4.75 L9.5 7.3 H4.5Z" fill="#191919"/><ellipse cx="7" cy="4.75" rx="1.9" ry="2" fill="#b0aca6"/></svg>
<div class="a t t4" style="left:426.80px;top:602.79px;font-size:11px;font-weight:400;color:#a4a19c;letter-spacing:-0.469px;word-spacing:0px">Valor</div>
<svg class="a" style="left:559.3px;top:602px" width="11" height="11" viewBox="0 0 11 11"><path d="M0.5 1.5h2V0h1.6v1.5h3.3V0h1.6v1.5h2v9.5h-10.5z" fill="#b0aca6"/><rect x="1.9" y="4.6" width="1.4" height="1.4" fill="#191919"/><rect x="4.6" y="4.6" width="1.4" height="1.4" fill="#191919"/><rect x="7.3" y="4.6" width="1.4" height="1.4" fill="#191919"/><rect x="1.9" y="7.2" width="1.4" height="1.4" fill="#191919"/><rect x="4.6" y="7.2" width="1.4" height="1.4" fill="#191919"/><rect x="7.3" y="7.2" width="1.4" height="1.4" fill="#191919"/></svg>
<div class="a t t4" style="left:576.80px;top:602.79px;font-size:11px;font-weight:400;color:#a4a19c;letter-spacing:-0.891px;word-spacing:0px">Mês</div>
<svg class="a" style="left:709px;top:602.5px" width="12" height="11" viewBox="0 0 12 11"><path d="M3.5 3.5 C3.5 1 4.6 0.3 6 0.3 C7.4 0.3 8.5 1 8.5 3.5" fill="none" stroke="#b0aca6" stroke-width="1.3"/><path d="M0.8 3.5h10.4l0.6 5.2H0.2z" fill="#b0aca6"/><rect x="0.2" y="9.6" width="11.6" height="1.4" fill="#b0aca6"/></svg>
<div class="a t t4" style="left:726.80px;top:602.79px;font-size:11px;font-weight:400;color:#a4a19c;letter-spacing:-0.461px;word-spacing:0px">Status do Pagamento</div>
<svg class="a" style="left:859.4px;top:601.8px" width="12" height="12" viewBox="0 0 12 12"><path d="M1.3 6V4.5a2 2 0 0 1 2-2h7 M8.5 0.5l2 2-2 2 M10.7 5.5V7a2 2 0 0 1-2 2h-7 M3.5 7l-2 2 2 2" fill="none" stroke="#b0aca6" stroke-width="1.3"/></svg>
<div class="a t t4" style="left:876.70px;top:602.79px;font-size:11px;font-weight:400;color:#a4a19c;letter-spacing:-0.414px;word-spacing:0px">Recorrente</div>
<svg class="a" style="left:1009.3px;top:602px" width="11" height="11" viewBox="0 0 11 11"><path d="M0.5 1.5h2V0h1.6v1.5h3.3V0h1.6v1.5h2v9.2h-10.5z" fill="#b0aca6"/><rect x="6.3" y="5.3" width="2.2" height="2.2" fill="#191919"/></svg>
<div class="a t t4" style="left:1026.80px;top:602.79px;font-size:11px;font-weight:400;color:#a4a19c;letter-spacing:-0.369px;word-spacing:0px">Data de Vencimento</div>
<svg class="a" style="left:1158px;top:602px" width="13.6" height="12" viewBox="0 0 13.6 12"><circle cx="3" cy="1.4" r="1.3" fill="#b0aca6"/><path d="M1.9 3.4 L0.4 7.2 M4.1 3.4 L5.6 7.2" stroke="#b0aca6" stroke-width="1" fill="none"/><rect x="1.8" y="3" width="2.4" height="4.4" fill="#b0aca6"/><path d="M2.4 7 V11.5 M3.6 7 V11.5" stroke="#b0aca6" stroke-width="1.1" fill="none"/><circle cx="10.6" cy="1.4" r="1.3" fill="#b0aca6"/><path d="M9.5 3.4 L8.0 7.2 M11.7 3.4 L13.2 7.2" stroke="#b0aca6" stroke-width="1" fill="none"/><path d="M9.5 3 H11.7 L12.6 8 H8.6Z" fill="#b0aca6"/><path d="M10.0 7 V11.5 M11.2 7 V11.5" stroke="#b0aca6" stroke-width="1.1" fill="none"/></svg>
<div class="a t t4" style="left:1176.70px;top:602.79px;font-size:11px;font-weight:400;color:#a4a19c;letter-spacing:-0.140px;word-spacing:0px">Cliente/Projeto</div>
<svg class="a" style="left:1308.8px;top:603.6px" width="8" height="8" viewBox="0 0 8 8"><path d="M4 0v8M0 4h8" stroke="#8a8782" stroke-width="1.3"/></svg>
<svg class="a" style="left:1329.3px;top:607.1px" width="10" height="2.4" viewBox="0 0 10 2.4"><circle cx="1.2" cy="1.2" r="1.1" fill="#a4a19c"/><circle cx="5" cy="1.2" r="1.1" fill="#a4a19c"/><circle cx="8.8" cy="1.2" r="1.1" fill="#a4a19c"/></svg>
<div class="a" style="left:43px;top:621px;width:1418px;height:1px;background:#2e2d2b;border-radius:0px"></div>
<div class="a" style="left:43px;top:649px;width:1418px;height:1px;background:#2e2d2b;border-radius:0px"></div>
<div class="a" style="left:43px;top:677px;width:1418px;height:1px;background:#2e2d2b;border-radius:0px"></div>
<div class="a" style="left:43px;top:705px;width:1418px;height:1px;background:#2e2d2b;border-radius:0px"></div>
<div class="a" style="left:43px;top:733px;width:1418px;height:1px;background:#2e2d2b;border-radius:0px"></div>
<div class="a" style="left:43px;top:761px;width:1418px;height:1px;background:#2e2d2b;border-radius:0px"></div>
<div class="a" style="left:252px;top:621px;width:1px;height:140px;background:#2e2d2b;border-radius:0px"></div>
<div class="a" style="left:402px;top:621px;width:1px;height:140px;background:#2e2d2b;border-radius:0px"></div>
<div class="a" style="left:552px;top:621px;width:1px;height:140px;background:#2e2d2b;border-radius:0px"></div>
<div class="a" style="left:702px;top:621px;width:1px;height:140px;background:#2e2d2b;border-radius:0px"></div>
<div class="a" style="left:852px;top:621px;width:1px;height:140px;background:#2e2d2b;border-radius:0px"></div>
<div class="a" style="left:1002px;top:621px;width:1px;height:140px;background:#2e2d2b;border-radius:0px"></div>
<div class="a" style="left:1152px;top:621px;width:1px;height:140px;background:#2e2d2b;border-radius:0px"></div>
<div class="a" style="left:1302px;top:621px;width:1px;height:140px;background:#2e2d2b;border-radius:0px"></div>
<svg class="a" style="left:49.9px;top:627.4px" width="11.5" height="14" viewBox="0 0 11.5 14"><path d="M0.6 2.1a1.6 1.6 0 0 1 1.6-1.6h4.4l3.9 3.9v7.5a1.6 1.6 0 0 1-1.6 1.6H2.2a1.6 1.6 0 0 1-1.6-1.6z M6.2 0.6v2.6a1.1 1.1 0 0 0 1.1 1.1h3.1" fill="none" stroke="#7f7c77" stroke-width="1.1"/></svg>
<div class="a t" style="left:66.80px;top:628.99px;font-size:11px;font-weight:700;color:#e8e8e8;letter-spacing:-0.428px;word-spacing:0px">Meta Ads - Cliente A</div>
<div class="a" style="left:258.7px;top:628px;width:112px;height:15px;background:#9a4d47;border-radius:3px"></div>
<div class="a t t4" style="left:262.70px;top:630.29px;font-size:11px;font-weight:400;color:#f7e4e2;letter-spacing:-0.467px;word-spacing:0px">Anúncios e Mídia Paga</div>
<div class="a t t4" style="left:492.50px;top:628.99px;font-size:11px;font-weight:400;color:#dcdcdc;letter-spacing:-0.804px;word-spacing:1.2px">R$ 2.500,00</div>
<div class="a" style="left:559.1px;top:628px;width:42px;height:15px;background:#34618f;border-radius:3px"></div>
<div class="a t t4" style="left:563.10px;top:630.29px;font-size:11px;font-weight:400;color:#e6eef7;letter-spacing:-0.380px;word-spacing:0px">Janeiro</div>
<div class="a" style="left:708.6px;top:628px;width:44.3px;height:15px;background:#3a6a4c;border-radius:7.5px"></div>
<svg class="a" style="left:713.6px;top:632.9px" width="6.2" height="6.2" viewBox="0 0 6.2 6.2"><circle cx="3.1" cy="3.1" r="3.1" fill="#4aa772"/></svg>
<div class="a t t4" style="left:723.20px;top:630.29px;font-size:11px;font-weight:400;color:#e3f0e7;letter-spacing:-1.001px;word-spacing:0px">Pago</div>
<svg class="a" style="left:859px;top:629px" width="12" height="12" viewBox="0 0 12 12"><rect x="0" y="0" width="12" height="12" rx="2.2" fill="#2383e2"/><path d="M2.8 6.3 L5 8.7 L9.3 3.3" fill="none" stroke="#fff" stroke-width="1.2"/></svg>
<div class="a t t4" style="left:1008.60px;top:628.99px;font-size:11px;font-weight:400;color:#dcdcdc;letter-spacing:-0.395px;word-spacing:0px">5 de janeiro de 2026</div>
<div class="a" style="left:1159.2px;top:628px;width:49.6px;height:15px;background:#34618f;border-radius:3px"></div>
<div class="a t t4" style="left:1163.20px;top:630.29px;font-size:11px;font-weight:400;color:#e6eef7;letter-spacing:-0.329px;word-spacing:0px">Cliente A</div>
<svg class="a" style="left:49.9px;top:655.4px" width="11.5" height="14" viewBox="0 0 11.5 14"><path d="M0.6 2.1a1.6 1.6 0 0 1 1.6-1.6h4.4l3.9 3.9v7.5a1.6 1.6 0 0 1-1.6 1.6H2.2a1.6 1.6 0 0 1-1.6-1.6z M6.2 0.6v2.6a1.1 1.1 0 0 0 1.1 1.1h3.1" fill="none" stroke="#7f7c77" stroke-width="1.1"/></svg>
<div class="a t" style="left:66.80px;top:656.99px;font-size:11px;font-weight:700;color:#e8e8e8;letter-spacing:-0.532px;word-spacing:0px">Adobe Creative Cloud</div>
<div class="a" style="left:258.7px;top:656px;width:114.2px;height:15px;background:#6a4f82;border-radius:3px"></div>
<div class="a t t4" style="left:262.70px;top:658.29px;font-size:11px;font-weight:400;color:#efe6f5;letter-spacing:-0.448px;word-spacing:0px">Ferramentas de Design</div>
<div class="a t t4" style="left:500.60px;top:656.99px;font-size:11px;font-weight:400;color:#dcdcdc;letter-spacing:-0.871px;word-spacing:1.2px">R$ 149,90</div>
<div class="a" style="left:559.1px;top:656px;width:42px;height:15px;background:#34618f;border-radius:3px"></div>
<div class="a t t4" style="left:563.10px;top:658.29px;font-size:11px;font-weight:400;color:#e6eef7;letter-spacing:-0.380px;word-spacing:0px">Janeiro</div>
<div class="a" style="left:708.6px;top:656px;width:44.3px;height:15px;background:#3a6a4c;border-radius:7.5px"></div>
<svg class="a" style="left:713.6px;top:660.9px" width="6.2" height="6.2" viewBox="0 0 6.2 6.2"><circle cx="3.1" cy="3.1" r="3.1" fill="#4aa772"/></svg>
<div class="a t t4" style="left:723.20px;top:658.29px;font-size:11px;font-weight:400;color:#e3f0e7;letter-spacing:-1.001px;word-spacing:0px">Pago</div>
<svg class="a" style="left:859px;top:657px" width="12" height="12" viewBox="0 0 12 12"><rect x="0" y="0" width="12" height="12" rx="2.2" fill="#2383e2"/><path d="M2.8 6.3 L5 8.7 L9.3 3.3" fill="none" stroke="#fff" stroke-width="1.2"/></svg>
<div class="a t t4" style="left:1008.60px;top:656.99px;font-size:11px;font-weight:400;color:#dcdcdc;letter-spacing:-0.392px;word-spacing:0px">10 de janeiro de 2026</div>
<div class="a" style="left:1159.2px;top:656px;width:91.8px;height:15px;background:#9a4d47;border-radius:3px"></div>
<div class="a t t4" style="left:1163.20px;top:658.29px;font-size:11px;font-weight:400;color:#f7e4e2;letter-spacing:-0.202px;word-spacing:0px">Marketing Próprio</div>
<svg class="a" style="left:49.9px;top:683.4px" width="11.5" height="14" viewBox="0 0 11.5 14"><path d="M0.6 2.1a1.6 1.6 0 0 1 1.6-1.6h4.4l3.9 3.9v7.5a1.6 1.6 0 0 1-1.6 1.6H2.2a1.6 1.6 0 0 1-1.6-1.6z M6.2 0.6v2.6a1.1 1.1 0 0 0 1.1 1.1h3.1" fill="none" stroke="#7f7c77" stroke-width="1.1"/></svg>
<div class="a t" style="left:66.80px;top:684.99px;font-size:11px;font-weight:700;color:#e8e8e8;letter-spacing:-0.728px;word-spacing:0px">Canva Pro</div>
<div class="a" style="left:258.7px;top:684px;width:114.2px;height:15px;background:#6a4f82;border-radius:3px"></div>
<div class="a t t4" style="left:262.70px;top:686.29px;font-size:11px;font-weight:400;color:#efe6f5;letter-spacing:-0.448px;word-spacing:0px">Ferramentas de Design</div>
<div class="a t t4" style="left:505.80px;top:684.99px;font-size:11px;font-weight:400;color:#dcdcdc;letter-spacing:-0.865px;word-spacing:1.2px">R$ 54,90</div>
<div class="a" style="left:559.1px;top:684px;width:42px;height:15px;background:#34618f;border-radius:3px"></div>
<div class="a t t4" style="left:563.10px;top:686.29px;font-size:11px;font-weight:400;color:#e6eef7;letter-spacing:-0.380px;word-spacing:0px">Janeiro</div>
<div class="a" style="left:708.6px;top:684px;width:44.3px;height:15px;background:#3a6a4c;border-radius:7.5px"></div>
<svg class="a" style="left:713.6px;top:688.9px" width="6.2" height="6.2" viewBox="0 0 6.2 6.2"><circle cx="3.1" cy="3.1" r="3.1" fill="#4aa772"/></svg>
<div class="a t t4" style="left:723.20px;top:686.29px;font-size:11px;font-weight:400;color:#e3f0e7;letter-spacing:-1.001px;word-spacing:0px">Pago</div>
<svg class="a" style="left:859px;top:685px" width="12" height="12" viewBox="0 0 12 12"><rect x="0" y="0" width="12" height="12" rx="2.2" fill="#2383e2"/><path d="M2.8 6.3 L5 8.7 L9.3 3.3" fill="none" stroke="#fff" stroke-width="1.2"/></svg>
<div class="a t t4" style="left:1008.60px;top:684.99px;font-size:11px;font-weight:400;color:#dcdcdc;letter-spacing:-0.392px;word-spacing:0px">15 de janeiro de 2026</div>
<div class="a" style="left:1159.2px;top:684px;width:91.8px;height:15px;background:#9a4d47;border-radius:3px"></div>
<div class="a t t4" style="left:1163.20px;top:686.29px;font-size:11px;font-weight:400;color:#f7e4e2;letter-spacing:-0.202px;word-spacing:0px">Marketing Próprio</div>
<svg class="a" style="left:49.9px;top:711.4px" width="11.5" height="14" viewBox="0 0 11.5 14"><path d="M0.6 2.1a1.6 1.6 0 0 1 1.6-1.6h4.4l3.9 3.9v7.5a1.6 1.6 0 0 1-1.6 1.6H2.2a1.6 1.6 0 0 1-1.6-1.6z M6.2 0.6v2.6a1.1 1.1 0 0 0 1.1 1.1h3.1" fill="none" stroke="#7f7c77" stroke-width="1.1"/></svg>
<div class="a t" style="left:66.80px;top:712.99px;font-size:11px;font-weight:700;color:#e8e8e8;letter-spacing:-0.428px;word-spacing:0px">Meta Ads - Cliente A</div>
<div class="a" style="left:258.7px;top:712px;width:112px;height:15px;background:#9a4d47;border-radius:3px"></div>
<div class="a t t4" style="left:262.70px;top:714.29px;font-size:11px;font-weight:400;color:#f7e4e2;letter-spacing:-0.467px;word-spacing:0px">Anúncios e Mídia Paga</div>
<div class="a t t4" style="left:492.50px;top:712.99px;font-size:11px;font-weight:400;color:#dcdcdc;letter-spacing:-0.804px;word-spacing:1.2px">R$ 2.500,00</div>
<div class="a" style="left:559.1px;top:712px;width:50.7px;height:15px;background:#6a4f82;border-radius:3px"></div>
<div class="a t t4" style="left:563.10px;top:714.29px;font-size:11px;font-weight:400;color:#efe6f5;letter-spacing:-0.496px;word-spacing:0px">Fevereiro</div>
<div class="a" style="left:708.6px;top:712px;width:44.3px;height:15px;background:#3a6a4c;border-radius:7.5px"></div>
<svg class="a" style="left:713.6px;top:716.9px" width="6.2" height="6.2" viewBox="0 0 6.2 6.2"><circle cx="3.1" cy="3.1" r="3.1" fill="#4aa772"/></svg>
<div class="a t t4" style="left:723.20px;top:714.29px;font-size:11px;font-weight:400;color:#e3f0e7;letter-spacing:-1.001px;word-spacing:0px">Pago</div>
<svg class="a" style="left:859px;top:713px" width="12" height="12" viewBox="0 0 12 12"><rect x="0" y="0" width="12" height="12" rx="2.2" fill="#2383e2"/><path d="M2.8 6.3 L5 8.7 L9.3 3.3" fill="none" stroke="#fff" stroke-width="1.2"/></svg>
<div class="a t t4" style="left:1008.60px;top:712.99px;font-size:11px;font-weight:400;color:#dcdcdc;letter-spacing:-0.352px;word-spacing:0px">5 de fevereiro de 2026</div>
<div class="a" style="left:1159.2px;top:712px;width:49.6px;height:15px;background:#34618f;border-radius:3px"></div>
<div class="a t t4" style="left:1163.20px;top:714.29px;font-size:11px;font-weight:400;color:#e6eef7;letter-spacing:-0.329px;word-spacing:0px">Cliente A</div>
<svg class="a" style="left:49.9px;top:739.4px" width="11.5" height="14" viewBox="0 0 11.5 14"><path d="M0.6 2.1a1.6 1.6 0 0 1 1.6-1.6h4.4l3.9 3.9v7.5a1.6 1.6 0 0 1-1.6 1.6H2.2a1.6 1.6 0 0 1-1.6-1.6z M6.2 0.6v2.6a1.1 1.1 0 0 0 1.1 1.1h3.1" fill="none" stroke="#7f7c77" stroke-width="1.1"/></svg>
<div class="a t" style="left:66.80px;top:740.99px;font-size:11px;font-weight:700;color:#e8e8e8;letter-spacing:-0.532px;word-spacing:0px">Adobe Creative Cloud</div>
<div class="a" style="left:258.7px;top:740px;width:114.2px;height:15px;background:#6a4f82;border-radius:3px"></div>
<div class="a t t4" style="left:262.70px;top:742.29px;font-size:11px;font-weight:400;color:#efe6f5;letter-spacing:-0.448px;word-spacing:0px">Ferramentas de Design</div>
<div class="a t t4" style="left:500.60px;top:740.99px;font-size:11px;font-weight:400;color:#dcdcdc;letter-spacing:-0.871px;word-spacing:1.2px">R$ 149,90</div>
<div class="a" style="left:559.1px;top:740px;width:50.7px;height:15px;background:#6a4f82;border-radius:3px"></div>
<div class="a t t4" style="left:563.10px;top:742.29px;font-size:11px;font-weight:400;color:#efe6f5;letter-spacing:-0.496px;word-spacing:0px">Fevereiro</div>
<div class="a" style="left:708.6px;top:740px;width:44.3px;height:15px;background:#3a6a4c;border-radius:7.5px"></div>
<svg class="a" style="left:713.6px;top:744.9px" width="6.2" height="6.2" viewBox="0 0 6.2 6.2"><circle cx="3.1" cy="3.1" r="3.1" fill="#4aa772"/></svg>
<div class="a t t4" style="left:723.20px;top:742.29px;font-size:11px;font-weight:400;color:#e3f0e7;letter-spacing:-1.001px;word-spacing:0px">Pago</div>
<svg class="a" style="left:859px;top:741px" width="12" height="12" viewBox="0 0 12 12"><rect x="0" y="0" width="12" height="12" rx="2.2" fill="#2383e2"/><path d="M2.8 6.3 L5 8.7 L9.3 3.3" fill="none" stroke="#fff" stroke-width="1.2"/></svg>
<div class="a t t4" style="left:1008.60px;top:740.99px;font-size:11px;font-weight:400;color:#dcdcdc;letter-spacing:-0.364px;word-spacing:0px">10 de fevereiro de 2026</div>
<div class="a" style="left:1159.2px;top:740px;width:91.8px;height:15px;background:#9a4d47;border-radius:3px"></div>
<div class="a t t4" style="left:1163.20px;top:742.29px;font-size:11px;font-weight:400;color:#f7e4e2;letter-spacing:-0.202px;word-spacing:0px">Marketing Próprio</div>
</body></html>
